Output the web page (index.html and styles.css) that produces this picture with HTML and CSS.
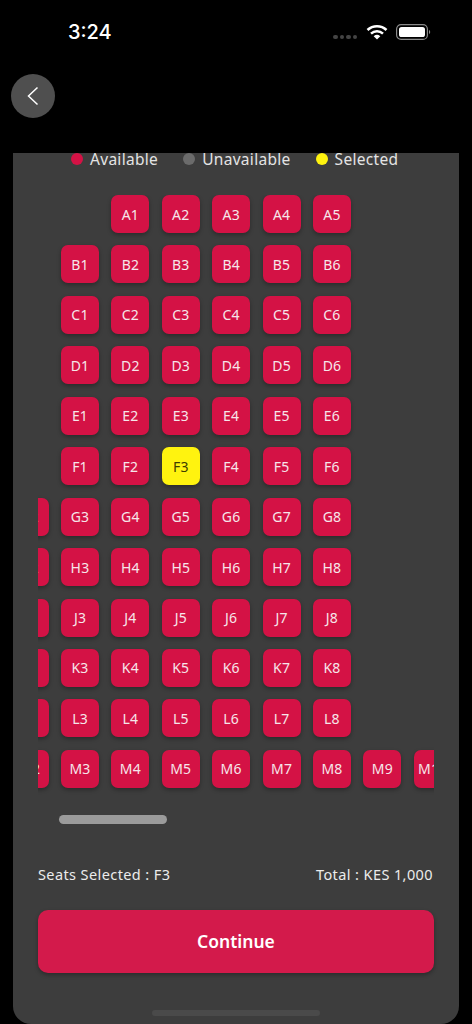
FILE: index.html
```html
<!DOCTYPE html>
<html lang="en">
<head>
<meta charset="utf-8">
<title>Select seats</title>
<link rel="stylesheet" href="styles.css">
</head>
<body>
<div class="status">
  <span class="time">3:24</span>
  <div class="status-icons">
    <div class="signal"><i></i><i></i><i></i><i></i></div>
    <svg class="wifi" width="22" height="16" viewBox="0 0 22 16"><path d="M1.5 6A14 14 0 0 1 20.5 6" fill="none" stroke="#fff" stroke-width="2.6"/><path d="M5 9.6A9 9 0 0 1 17 9.6" fill="none" stroke="#fff" stroke-width="2.6"/><path d="M7.7 12.2A5 5 0 0 1 14.3 12.2L11 15.6Z" fill="#fff"/></svg>
    <svg class="battery" width="35" height="16" viewBox="0 0 35 16"><rect x="0.6" y="0.6" width="30.8" height="14.8" rx="4.5" fill="none" stroke="#8a8a8a" stroke-width="1.2"/><rect x="3" y="3" width="26" height="10" rx="2.6" fill="#fff"/><path d="M33 6v4a2 2 0 0 0 1.2-2A2 2 0 0 0 33 6Z" fill="#8a8a8a"/></svg>
  </div>
</div>
<div class="nav">
  <button class="back" aria-label="Back">
    <svg width="14" height="22" viewBox="0 0 14 22"><path d="M11.5 2.5 2.5 11l9 8.5" fill="none" stroke="#fff" stroke-width="1.5"/></svg>
  </button>
</div>
<main class="sheet">
  <div class="legend">
    <span class="legend-item"><i class="dot red"></i>Available</span>
    <span class="legend-item"><i class="dot grey"></i>Unavailable</span>
    <span class="legend-item"><i class="dot yellow"></i>Selected</span>
  </div>
  <div class="viewport">
    <div class="seats">
      <div class="seat first-a">A1</div><div class="seat">A2</div><div class="seat">A3</div><div class="seat">A4</div><div class="seat">A5</div>
      <div class="seat first-b">B1</div><div class="seat">B2</div><div class="seat">B3</div><div class="seat">B4</div><div class="seat">B5</div><div class="seat">B6</div>
      <div class="seat first-b">C1</div><div class="seat">C2</div><div class="seat">C3</div><div class="seat">C4</div><div class="seat">C5</div><div class="seat">C6</div>
      <div class="seat first-b">D1</div><div class="seat">D2</div><div class="seat">D3</div><div class="seat">D4</div><div class="seat">D5</div><div class="seat">D6</div>
      <div class="seat first-b">E1</div><div class="seat">E2</div><div class="seat">E3</div><div class="seat">E4</div><div class="seat">E5</div><div class="seat">E6</div>
      <div class="seat first-b">F1</div><div class="seat">F2</div><div class="seat selected">F3</div><div class="seat">F4</div><div class="seat">F5</div><div class="seat">F6</div>
      <div class="seat first-g">G2</div><div class="seat">G3</div><div class="seat">G4</div><div class="seat">G5</div><div class="seat">G6</div><div class="seat">G7</div><div class="seat">G8</div>
      <div class="seat first-g">H2</div><div class="seat">H3</div><div class="seat">H4</div><div class="seat">H5</div><div class="seat">H6</div><div class="seat">H7</div><div class="seat">H8</div>
      <div class="seat first-g">J2</div><div class="seat">J3</div><div class="seat">J4</div><div class="seat">J5</div><div class="seat">J6</div><div class="seat">J7</div><div class="seat">J8</div>
      <div class="seat first-g">K2</div><div class="seat">K3</div><div class="seat">K4</div><div class="seat">K5</div><div class="seat">K6</div><div class="seat">K7</div><div class="seat">K8</div>
      <div class="seat first-g">L2</div><div class="seat">L3</div><div class="seat">L4</div><div class="seat">L5</div><div class="seat">L6</div><div class="seat">L7</div><div class="seat">L8</div>
      <div class="seat first-g">M2</div><div class="seat">M3</div><div class="seat">M4</div><div class="seat">M5</div><div class="seat">M6</div><div class="seat">M7</div><div class="seat">M8</div><div class="seat">M9</div><div class="seat">M10</div>
    </div>
  </div>
  <div class="scrollbar"></div>
  <div class="summary">
    <span>Seats Selected : F3</span>
    <span>Total : KES 1,000</span>
  </div>
  <button class="continue">Continue</button>
  <div class="home"></div>
</main>
</body>
</html>
```
FILE: styles.css
```css
* { box-sizing: border-box; }
html, body { margin: 0; height: 1024px; overflow: hidden; background: #000; }
body {
  width: 472px;
  display: flex;
  flex-direction: column;
  font-family: "Noto Sans", "DejaVu Sans", sans-serif;
  color: #fff;
}
.status {
  height: 64px;
  display: flex;
  justify-content: space-between;
  align-items: center;
  padding: 0 41px 0 68px;
}
.time { font-family: Inter, Roboto, sans-serif; font-size: 20px; font-weight: 500; }
.status-icons { display: flex; align-items: center; }
.signal { display: flex; gap: 2px; margin: 10px 9px 0 0; }
.signal i { width: 4.4px; height: 4px; border-radius: 2px; background: #444; }
.wifi { margin-right: 8px; }
.nav { height: 89px; padding: 10px 0 0 11px; }
.back {
  width: 44px;
  height: 44px;
  padding: 0;
  border: 0;
  border-radius: 50%;
  background: #4f4f4f;
  display: flex;
  align-items: center;
  justify-content: center;
}
.sheet {
  flex: 1;
  margin: 0 13px;
  padding: 0 25px;
  background: #3d3d3d;
  border-radius: 0 0 18px 18px;
  display: flex;
  flex-direction: column;
}
.legend {
  height: 12px;
  display: flex;
  align-items: center;
  font-size: 15.5px;
  line-height: 12px;
  letter-spacing: 0.3px;
  color: #e4e4e4;
  padding-left: 33px;
  gap: 25px;
}
.legend-item { display: flex; align-items: center; gap: 7px; white-space: nowrap; }
.dot { width: 12px; height: 12px; border-radius: 50%; }
.red { background: #d41245; }
.grey { background: #6b6b6b; }
.yellow { background: #fff30f; }
.viewport {
  margin-top: 30px;
  height: 618px;
  overflow: hidden;
}
.seats {
  width: 480px;
  margin-left: -27.4px;
  display: grid;
  grid-template-columns: repeat(9, 38px);
  grid-auto-rows: 38px;
  gap: 12.45px 12.4px;
  padding-bottom: 6px;
}
.seat {
  border-radius: 7px;
  background: #d41245;
  box-shadow: 0 2px 4px rgba(0, 0, 0, 0.3);
  display: flex;
  align-items: center;
  justify-content: center;
  font-size: 14px;
  letter-spacing: 0.2px;
  color: #f6e6ea;
  white-space: nowrap;
}
.first-a { grid-column: 3; }
.first-b { grid-column: 2; }
.first-g { grid-column: 1; }
.selected { background: #fff30f; color: #3d3d00; }
.scrollbar {
  width: 108px;
  height: 9px;
  margin: 2px 0 0 21px;
  border-radius: 5px;
  background: #9b9b9b;
}
.summary {
  margin-top: 40px;
  display: flex;
  justify-content: space-between;
  font-size: 14.5px;
  line-height: 20px;
  letter-spacing: 0.4px;
  color: #ececec;
  padding-right: 1px;
}
.continue {
  margin-top: 26px;
  height: 63px;
  padding-bottom: 3px;
  border: 0;
  border-radius: 10px;
  background: #d31a4b;
  box-shadow: 0 2px 4px rgba(0, 0, 0, 0.3);
  color: #fff;
  font-family: inherit;
  font-size: 17.5px;
  font-weight: 600;
}
.home {
  width: 168px;
  height: 6px;
  margin: 37px 0 0 114px;
  border-radius: 3px;
  background: #4a4a4a;
}
```
